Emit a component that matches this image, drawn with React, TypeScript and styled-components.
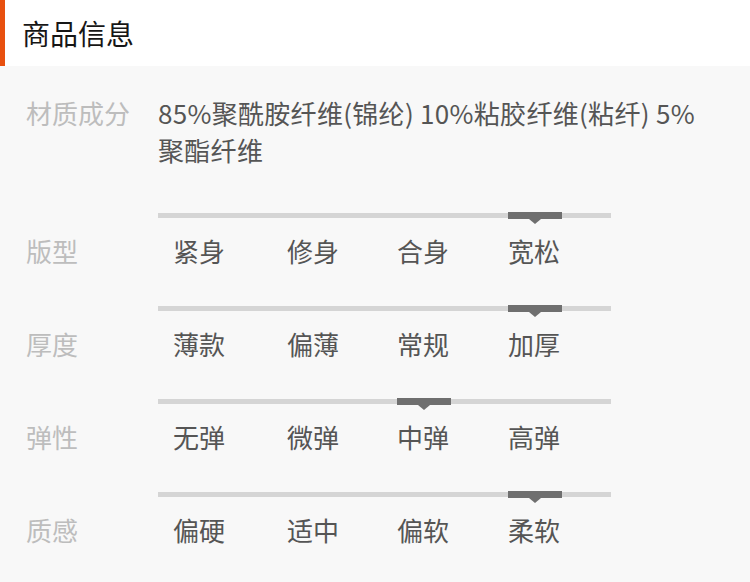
import React from "react";
import styled, { createGlobalStyle } from "styled-components";

const GlobalStyle = createGlobalStyle`
  html, body {
    margin: 0;
    padding: 0;
    background: #f8f8f8;
  }
  body {
    font-family: "Noto Sans CJK SC", "Noto Sans", sans-serif;
  }
`;

const Page = styled.div`
  width: 750px;
  min-height: 582px;
  background: #f8f8f8;
`;

const Header = styled.header`
  height: 66px;
  background: #ffffff;
  border-left: 5px solid #e8500f;
  display: flex;
  align-items: center;
  padding-left: 17px;
  box-sizing: border-box;
`;

const Title = styled.h1`
  margin: 0;
  font-size: 28px;
  font-weight: normal;
  color: #161616;
  line-height: 1;
`;

const Body = styled.section`
  padding: 28px 26px 0 26px;
`;

const Row = styled.div`
  display: grid;
  grid-template-columns: 132px 1fr;
  align-items: end;
  font-size: 26px;
  line-height: 37px;
`;

const MaterialRow = styled(Row)`
  align-items: start;
  margin-bottom: 45px;
`;

const Label = styled.div`
  color: #bdbdbd;
`;

const Value = styled.div`
  color: #555555;
  width: 545px;
  letter-spacing: 0.3px;
`;

const SliderRow = styled(Row)`
  margin-bottom: 37px;
`;

const Slider = styled.div`
  display: flex;
  flex-direction: column;
  gap: 14px;
`;

const columns = "114px 110px 111px 111px";

const Track = styled.div`
  width: 453px;
  height: 5px;
  background: #d5d5d5;
  display: grid;
  grid-template-columns: ${columns};
  padding-left: 15px;
  box-sizing: border-box;
`;

const Marker = styled.div<{ $col: number }>`
  grid-column: ${(p) => p.$col + 1};
  position: relative;
  width: 54px;
  height: 7px;
  margin-top: -1px;
  background: #6f6f6f;

  &::after {
    content: "";
    position: absolute;
    left: 50%;
    top: 7px;
    margin-left: -6px;
    border-left: 6px solid transparent;
    border-right: 6px solid transparent;
    border-top: 5px solid #6f6f6f;
  }
`;

const Options = styled.div`
  display: grid;
  grid-template-columns: ${columns};
  padding-left: 15px;
  color: #555555;
`;

type Attr = { label: string; options: string[]; selected: number };

const attrs: Attr[] = [
  { label: "版型", options: ["紧身", "修身", "合身", "宽松"], selected: 3 },
  { label: "厚度", options: ["薄款", "偏薄", "常规", "加厚"], selected: 3 },
  { label: "弹性", options: ["无弹", "微弹", "中弹", "高弹"], selected: 2 },
  { label: "质感", options: ["偏硬", "适中", "偏软", "柔软"], selected: 3 },
];

const App = () => (
  <Page>
    <GlobalStyle />
    <Header>
      <Title>商品信息</Title>
    </Header>
    <Body>
      <MaterialRow>
        <Label>材质成分</Label>
        <Value>85%聚酰胺纤维(锦纶) 10%粘胶纤维(粘纤) 5%聚酯纤维</Value>
      </MaterialRow>
      {attrs.map((a) => (
        <SliderRow key={a.label}>
          <Label>{a.label}</Label>
          <Slider>
            <Track>
              <Marker $col={a.selected} />
            </Track>
            <Options>
              {a.options.map((o) => (
                <span key={o}>{o}</span>
              ))}
            </Options>
          </Slider>
        </SliderRow>
      ))}
    </Body>
  </Page>
);

export default App;
